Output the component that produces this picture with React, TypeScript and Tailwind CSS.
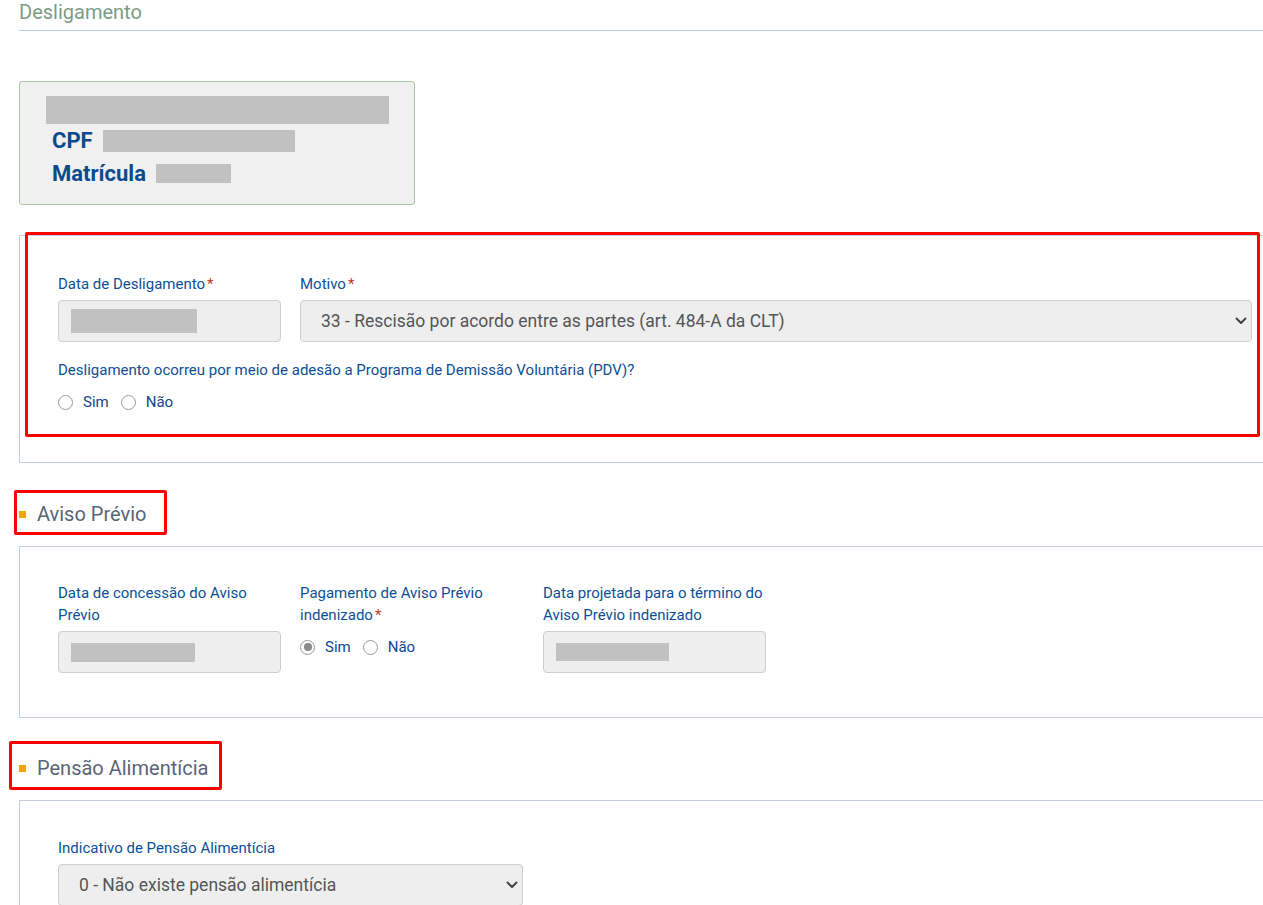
import { ReactNode } from "react";

const labelCls = "text-[15px] leading-[22px] text-[#0d4f97]";

function Req() {
  return <span className="text-[#c0392b] ml-[2px]">*</span>;
}

function Redacted({ w, h }: { w: number; h: number }) {
  return <div className="bg-[#c1c1c1]" style={{ width: w, height: h }} />;
}

function FakeInput({ bar }: { bar: [number, number] }) {
  return (
    <div className="h-[42px] w-[223px] rounded-[4px] border border-[#cfcfcf] bg-[#eeeeee] flex items-center pl-[12px]">
      <Redacted w={bar[0]} h={bar[1]} />
    </div>
  );
}

function Chevron() {
  return (
    <svg width="12" height="8" viewBox="0 0 12 8" fill="none">
      <path d="M1.5 1.5 6 6l4.5-4.5" stroke="#444" strokeWidth="2" strokeLinecap="round" strokeLinejoin="round" />
    </svg>
  );
}

function FakeSelect({ text, className }: { text: string; className: string }) {
  return (
    <div
      className={`h-[42px] rounded-[4px] border border-[#cfcfcf] bg-[#eeeeee] flex items-center justify-between pl-[20px] pr-[4px] text-[17.5px] text-[#555] ${className}`}
    >
      <span>{text}</span>
      <Chevron />
    </div>
  );
}

function Radio({ label, checked }: { label: string; checked?: boolean }) {
  return (
    <label className="flex items-center gap-[10px] text-[15px] leading-[20px] text-[#12468a]">
      <span className="w-[15px] h-[15px] rounded-full border border-[#9a9a9a] bg-white flex items-center justify-center">
        {checked && <span className="w-[8px] h-[8px] rounded-full bg-[#8a8a8a]" />}
      </span>
      {label}
    </label>
  );
}

function Panel({ children, className = "" }: { children: ReactNode; className?: string }) {
  return (
    <div className={`relative border-l border-t border-b border-[#c5cfd9] pl-[38px] pr-[11px] ${className}`}>
      {children}
    </div>
  );
}

function SectionHeading({ title, box }: { title: string; box: string }) {
  return (
    <div className="relative flex items-center gap-[11px] h-[30px]">
      <span className="w-[7px] h-[7px] bg-[#f5a300]" />
      <span className="text-[20px] text-[#596577]">{title}</span>
      <div className={`absolute border-[3px] border-[#ff0000] rounded-[2px] ${box}`} />
    </div>
  );
}

export default function App() {
  return (
    <div className="min-h-[905px] bg-white pl-[19px] overflow-hidden" style={{ fontFamily: "Roboto, 'Liberation Sans', sans-serif" }}>
      {/* Page title */}
      <div className="h-[31px] border-b border-[#b9c9e0] flex items-start">
        <span className="text-[20px] leading-[24px] text-[#7c9c85]">Desligamento</span>
      </div>

      {/* Employee card */}
      <div className="mt-[50px] w-[396px] rounded-[3px] border border-[#a9c99f] bg-[#f0f0f0] pt-[14px] pb-[14px] pl-[26px]">
        <Redacted w={343} h={28} />
        <div className="flex items-center gap-[10px] h-[33px] pl-[6px] text-[22px] font-bold text-[#0b4a8e]">
          <span>CPF</span>
          <Redacted w={192} h={22} />
        </div>
        <div className="flex items-center gap-[10px] h-[33px] pl-[6px] text-[22px] font-bold text-[#0b4a8e]">
          <span>Matrícula</span>
          <Redacted w={75} h={19} />
        </div>
      </div>

      {/* Desligamento panel */}
      <Panel className="mt-[30px] pt-[37px] pb-[50px]">
        <div className="flex gap-[19px]">
          <div className="w-[223px]">
            <div className={`${labelCls} mb-[5px]`}>
              Data de Desligamento<Req />
            </div>
            <FakeInput bar={[126, 24]} />
          </div>
          <div className="flex-1">
            <div className={`${labelCls} mb-[5px]`}>
              Motivo<Req />
            </div>
            <FakeSelect text="33 - Rescisão por acordo entre as partes (art. 484-A da CLT)" className="w-full" />
          </div>
        </div>
        <div className={`${labelCls} mt-[17px]`}>
          Desligamento ocorreu por meio de adesão a Programa de Demissão Voluntária (PDV)?
        </div>
        <div className="flex items-center gap-[12px] mt-[11px]">
          <Radio label="Sim" />
          <Radio label="Não" />
        </div>
        <div className="absolute left-[5px] top-[-4px] w-[1235px] h-[205px] border-[3px] border-[#ff0000] rounded-[2px]" />
      </Panel>

      {/* Aviso Prévio */}
      <div className="mt-[36px]">
        <SectionHeading title="Aviso Prévio" box="left-[-5px] top-[-9px] w-[153px] h-[45px]" />
      </div>
      <Panel className="mt-[17px] pt-[35px] pb-[44px]">
        <div className="flex gap-[19px]">
          <div className="w-[223px]">
            <div className={`${labelCls} mb-[5px]`}>Data de concessão do Aviso Prévio</div>
            <FakeInput bar={[124, 19]} />
          </div>
          <div className="w-[224px]">
            <div className={`${labelCls} mb-[11px]`}>
              Pagamento de Aviso Prévio indenizado<Req />
            </div>
            <div className="flex items-center gap-[12px]">
              <Radio label="Sim" checked />
              <Radio label="Não" />
            </div>
          </div>
          <div className="w-[223px]">
            <div className={`${labelCls} mb-[5px]`}>Data projetada para o término do Aviso Prévio indenizado</div>
            <FakeInput bar={[113, 18]} />
          </div>
        </div>
      </Panel>

      {/* Pensão Alimentícia */}
      <div className="mt-[35px]">
        <SectionHeading title="Pensão Alimentícia" box="left-[-10px] top-[-12px] w-[213px] h-[49px]" />
      </div>
      <Panel className="mt-[17px] pt-[36px] pb-[20px]">
        <div className={`${labelCls} mb-[5px]`}>Indicativo de Pensão Alimentícia</div>
        <FakeSelect text="0 - Não existe pensão alimentícia" className="w-[465px]" />
      </Panel>
    </div>
  );
}
